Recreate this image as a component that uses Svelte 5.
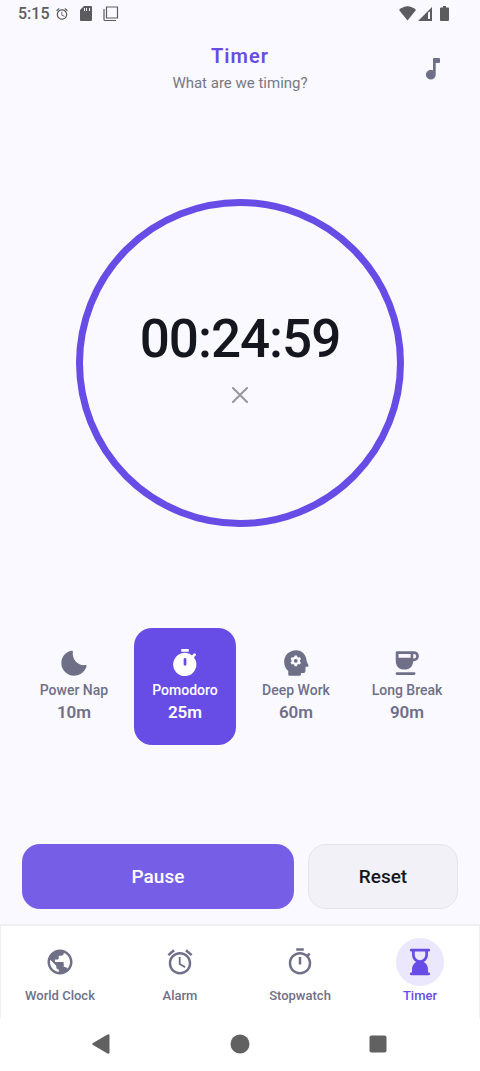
<script>
  const presets = [
    { name: 'Power Nap', time: '10m', icon: 'moon' },
    { name: 'Pomodoro', time: '25m', icon: 'timerFilled' },
    { name: 'Deep Work', time: '60m', icon: 'head' },
    { name: 'Long Break', time: '90m', icon: 'coffee' }
  ];
  const tabs = [
    { name: 'World Clock', icon: 'globe' },
    { name: 'Alarm', icon: 'alarm' },
    { name: 'Stopwatch', icon: 'stopwatch' },
    { name: 'Timer', icon: 'hourglass' }
  ];
  let selected = $state('Pomodoro');
  let running = $state(true);

  const icons = {
    moon: 'M9.7 2.2C4.9 3.4 1.9 7.4 1.9 12a10 10 0 0 0 10.1 10.1c4.6 0 8.6-3 10-7.400.2-.7-.2-1.100-.9-1.100C15.500 14.600 10.200 9.500 11.100 3c0-.7-.5-1-1.400-.8z',
    timerFilled: 'M9 .8h6v2.200H9zM19.100 7.400l1.300-1.300a1 1 0 0 0-1.500-1.500l-1.300 1.300A9.300 9.300 0 1 0 19.100 7.400zM13.100 13a1.100 1.100 0 0 1-2.200 0V9a1.100 1.100 0 0 1 2.200 0z',
    head: 'M12 1.8C6.700 1.800 2.500 5.900 2.500 11c0 3.200 1.300 5.700 3.300 7.400v2.800c0 .6.300.9.900.9h8.300c.6 0 .9-.3.900-.9v-1.200h1.600c1.300 0 2.100-.8 2.100-2.100v-2.900h1.500c.8 0 1.100-.7.800-1.300l-1.400-3.200C20.300 5.500 16.800 1.800 12 1.800zM10.600 7l.3-1.100h1.800l.3 1.100 1 .6 1.100-.3.900 1.500-.8.800v1.200l.8.800-.9 1.500-1.100-.3-1 .6-.3 1.100h-1.800l-.3-1.100-1-.6-1.100.3-.9-1.500.8-.8V9.600l-.8-.8.9-1.500 1.100.3zM11.800 8.700a1.500 1.500 0 1 0 0 3 1.500 1.500 0 0 0 0-3z',
    coffee: 'M4.200 2.500h13.300a4 4 0 0 1 0 8h-.5c-.4 4.200-2.700 6.700-6.900 6.700-4.600 0-7.100-2.600-7.100-7.300V3.700c0-.8.400-1.200 1.200-1.200zM5.200 4.700v3h9.700v-3zM17 4.700v3.700h.5a1.850 1.850 0 0 0 0-3.700zM4 19.300h13.700a1.100 1.100 0 0 1 0 2.200H4a1.100 1.100 0 0 1 0-2.200z',
    globe: 'M12 2C6.480 2 2 6.480 2 12s4.480 10 10 10 10-4.480 10-10S17.520 2 12 2zm-1 17.930c-3.950-.49-7-3.850-7-7.930 0-.62.080-1.210.210-1.790L9 15v1c0 1.100.9 2 2 2v1.930zm6.900-2.540c-.26-.81-1-1.390-1.900-1.390h-1v-3c0-.55-.45-1-1-1H8v-2h2c.55 0 1-.45 1-1V7h2c1.100 0 2-.9 2-2v-.41c2.930 1.190 5 4.060 5 7.410 0 2.080-.8 3.970-2.100 5.390z',
    alarm: 'M22 5.720l-4.600-3.860-1.290 1.530 4.600 3.860L22 5.720zM7.880 3.390L6.600 1.860 2 5.710l1.290 1.530 4.590-3.850zM12.500 8H11v6l4.750 2.850.75-1.230-4-2.370V8zM12 4c-4.970 0-9 4.030-9 9s4.020 9 9 9c4.970 0 9-4.030 9-9s-4.030-9-9-9zm0 16c-3.870 0-7-3.130-7-7s3.130-7 7-7 7 3.130 7 7-3.130 7-7 7z',
    stopwatch: 'M15 1H9v2h6V1zm-4 13h2V8h-2v6zm8.030-6.610l1.420-1.420c-.43-.51-.9-.99-1.410-1.410l-1.420 1.420C16.070 4.740 14.120 4 12 4c-4.970 0-9 4.030-9 9s4.020 9 9 9 9-4.030 9-9c0-2.120-.74-4.070-1.970-5.610zM12 20c-3.870 0-7-3.130-7-7s3.130-7 7-7 7 3.130 7 7-3.130 7-7 7z',
    hourglass: 'M5 1.400h14a1.100 1.100 0 0 1 0 2.200h-.6V6c0 3-1.300 4.700-3.400 6 2.100 1.300 3.400 3 3.400 6v2.300h.6a1.100 1.100 0 0 1 0 2.200H5a1.100 1.100 0 0 1 0-2.200h.6V18c0-3 1.300-4.700 3.400-6-2.100-1.300-3.400-3-3.400-6V3.600H5a1.100 1.100 0 0 1 0-2.200zM7.800 3.600V6c0 2.600 1.800 4.500 4.200 4.500s4.200-1.900 4.200-4.500V3.600z'
  };
</script>

{#snippet icon(name)}
  <svg class="icon" viewBox="0 0 24 24" aria-hidden="true"><path fill-rule="evenodd" d={icons[name]} /></svg>
{/snippet}

<div class="app">
  <div class="status">
    <span class="clock">5:15</span>
    <svg width="14" height="14" viewBox="0 0 24 24" aria-hidden="true"><path d={icons.alarm} /></svg>
    <svg class="card" width="12" height="15" viewBox="0 0 12 15" aria-hidden="true"><path fill-rule="evenodd" d="M4 0h7q1 0 1 1v13q0 1-1 1H1q-1 0-1-1V4zM4 2v3h1V2zM6 2v3h1V2zM9 2v3h1V2z" /></svg>
    <svg class="copy" width="16" height="16" viewBox="0 0 16 16" aria-hidden="true"><path fill="none" stroke="currentColor" stroke-width="1.200" d="M3.500 1h11v11h-11zM1 3v10.500q0 1 1 1h11" /></svg>
    <span class="grow"></span>
    <svg width="17" height="15" viewBox="0 0 17 15" aria-hidden="true"><path d="M0 4Q8.500-3.500 17 4L8.500 14.500z" /></svg>
    <svg class="signal" width="14" height="14" viewBox="0 0 14 14" aria-hidden="true"><path fill-rule="evenodd" d="M14 0v14H0zM10 5.500V12h2V4.500z" /></svg>
    <svg class="battery" width="9" height="15" viewBox="0 0 9 15" aria-hidden="true"><path d="M3 0h3v1.500h2q1 0 1 1V14q0 1-1 1H1q-1 0-1-1V2.500q0-1 1-1h2z" /></svg>
  </div>

  <header>
    <div class="titles">
      <h1>Timer</h1>
      <p>What are we timing?</p>
    </div>
    <button class="music" aria-label="Timer sound">
      <svg width="16" height="22" viewBox="0 0 16 22" aria-hidden="true"><path d="M8 1q0-1 1-1h5q1 0 1 1v3q0 1-1 1h-3.300v11.500A4.900 4.900 0 1 1 8 12.300z" /></svg>
    </button>
  </header>

  <main>
    <div class="dial">
      <svg class="ring" viewBox="0 0 328 328" aria-hidden="true"><circle cx="164" cy="164" r="160.500" /></svg>
      <div class="readout">
        <time>00:24:59</time>
        <button class="cancel" aria-label="Cancel timer">
          <svg width="16" height="16" viewBox="0 0 16 16" aria-hidden="true"><path d="M1 1l14 14M15 1L1 15" /></svg>
        </button>
      </div>
    </div>
  </main>

  <div class="presets">
    {#each presets as p}
      <button class="preset" class:selected={selected === p.name} aria-pressed={selected === p.name} onclick={() => (selected = p.name)}>
        {@render icon(p.icon)}
        <span class="name">{p.name}</span>
        <span class="length">{p.time}</span>
      </button>
    {/each}
  </div>

  <div class="actions">
    <button class="pause" onclick={() => (running = !running)}>{running ? 'Pause' : 'Resume'}</button>
    <button class="reset">Reset</button>
  </div>

  <nav class="tabs">
    {#each tabs as t}
      <a href="#{t.icon}" class:active={t.name === 'Timer'}>
        <span class="bubble">{@render icon(t.icon)}</span>
        <span>{t.name}</span>
      </a>
    {/each}
  </nav>

  <div class="system">
    <button aria-label="Back"><svg width="18" height="20" viewBox="0 0 18 20" aria-hidden="true"><path d="M1 9L15.500.600Q17.500-.200 17.500 1.800V18.200Q17.500 20.200 15.500 19.400L1 11Q-.5 10 1 9z" /></svg></button>
    <button aria-label="Home"><svg width="20" height="20" viewBox="0 0 20 20" aria-hidden="true"><circle cx="10" cy="10" r="9.500" /></svg></button>
    <button aria-label="Recent apps"><svg width="18" height="18" viewBox="0 0 18 18" aria-hidden="true"><rect x=".5" y=".5" width="17" height="17" rx="2" /></svg></button>
  </div>
</div>

<style>
  :global(body) {
    margin: 0;
    background: #faf9ff;
  }
  .app {
    display: flex;
    flex-direction: column;
    min-height: 100vh;
    background: #faf9ff;
    color: #6f7088;
    font-family: Roboto, sans-serif;
  }
  button {
    border: 0;
    padding: 0;
    background: none;
    color: inherit;
    font-family: inherit;
    cursor: pointer;
  }
  svg {
    display: block;
    fill: currentColor;
  }
  .icon {
    width: 30px;
    height: 30px;
  }
  .status {
    display: flex;
    align-items: center;
    height: 27px;
    padding: 0 31px 0 18px;
    color: #5c5c5e;
  }
  .clock {
    font-size: 16px;
    font-weight: 500;
    line-height: 20px;
    margin-right: 5px;
  }
  .card {
    margin: 0 11px;
  }
  .grow {
    flex: 1;
  }
  .signal {
    margin-left: 2px;
  }
  .battery {
    margin-left: 8px;
  }
  header {
    display: grid;
    grid-template-columns: 1fr auto 1fr;
    align-items: center;
    padding: 17px 23px 0;
    text-align: center;
  }
  .titles {
    grid-column: 2;
  }
  h1 {
    margin: 0;
    color: #674de5;
    font-size: 20px;
    font-weight: 600;
    line-height: 24px;
    letter-spacing: 1px;
  }
  p {
    margin: 5px 0 0;
    color: #777883;
    font-size: 15px;
    line-height: 20px;
  }
  .music {
    display: grid;
    place-items: center;
    justify-self: end;
    width: 48px;
    height: 48px;
  }
  main {
    display: flex;
    flex: 1;
    align-items: center;
    justify-content: center;
    padding-top: 4px;
  }
  .dial {
    display: grid;
    place-items: center;
    width: 70%;
    max-width: 328px;
  }
  .dial > * {
    grid-area: 1 / 1;
  }
  .ring {
    width: 100%;
    fill: none;
    stroke: #674de5;
    stroke-width: 7;
  }
  .readout {
    display: flex;
    flex-direction: column;
    align-items: center;
  }
  time {
    color: #15161e;
    font-size: 53px;
    font-weight: 500;
    line-height: 64px;
    letter-spacing: -1px;
  }
  .cancel {
    display: grid;
    place-items: center;
    width: 48px;
    height: 48px;
  }
  .cancel path {
    stroke: #9495a1;
    stroke-width: 2;
    stroke-linecap: round;
  }
  .presets {
    display: grid;
    grid-template-columns: repeat(4, 1fr);
    gap: 9px;
    padding: 0 22px 0 23px;
  }
  .preset {
    display: flex;
    flex-direction: column;
    align-items: center;
    padding: 20px 0 22px;
    border-radius: 18px;
  }
  .preset.selected {
    background: #674de5;
    color: #fff;
  }
  .name {
    margin-top: 2px;
    font-size: 14px;
    font-weight: 500;
    line-height: 20px;
  }
  .length {
    margin-top: 1px;
    font-size: 17px;
    font-weight: 600;
    line-height: 22px;
  }
  .actions {
    display: grid;
    grid-template-columns: 272fr 150fr;
    gap: 14px;
    padding: 99px 22px 15px;
  }
  .actions button {
    height: 65px;
    border-radius: 18px;
    font-size: 19px;
    font-weight: 500;
  }
  .actions .pause {
    background: #775ee6;
    color: #fff;
  }
  .actions .reset {
    border: 1px solid #e5e4ec;
    background: #f2f1f7;
    color: #15161e;
  }
  .tabs {
    display: grid;
    grid-template-columns: repeat(4, 1fr);
    padding: 12px 0;
    border-top: 2px solid #f0eff4;
    box-shadow: inset 1px 0 #f0eff4, inset -1px 0 #f0eff4;
    background: #fff;
  }
  .tabs a {
    display: flex;
    flex-direction: column;
    align-items: center;
    color: inherit;
    font-size: 13px;
    font-weight: 500;
    line-height: 20px;
    text-decoration: none;
  }
  .tabs .active {
    color: #674de5;
  }
  .bubble {
    display: grid;
    place-items: center;
    width: 48px;
    height: 48px;
    border-radius: 50%;
  }
  .active .bubble {
    background: #ebe7fc;
  }
  .system {
    display: flex;
    align-items: center;
    justify-content: space-between;
    height: 51px;
    padding: 0 93px 2px 92px;
    background: #fff;
    color: #616161;
  }
</style>
